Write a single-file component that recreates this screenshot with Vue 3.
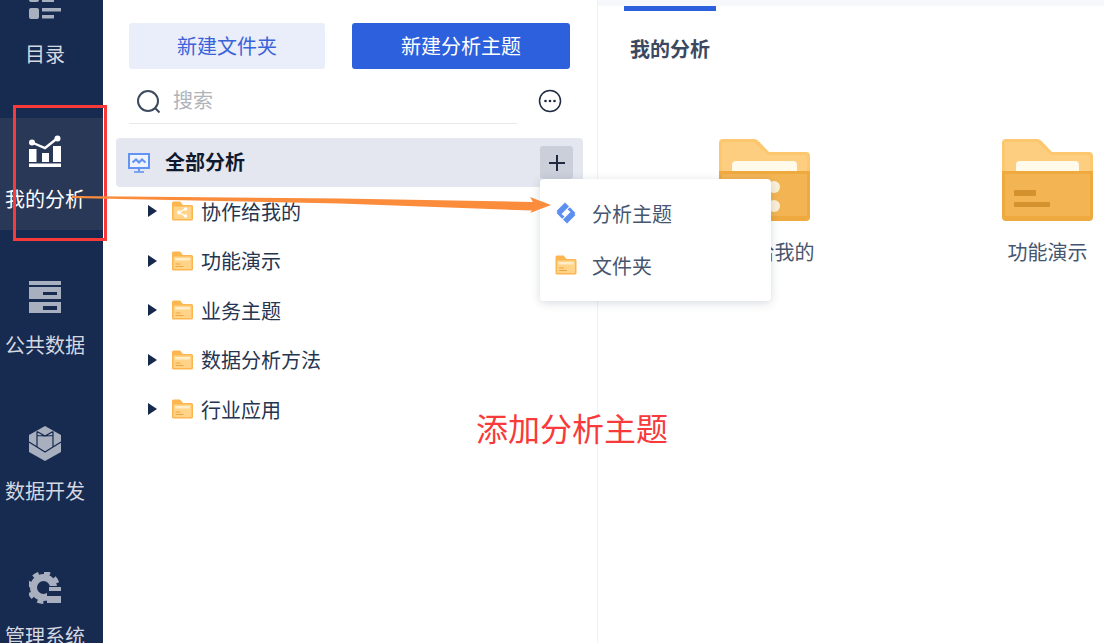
<script setup>
const treeRows = [
  { label: '协作给我的', share: true },
  { label: '功能演示' },
  { label: '业务主题' },
  { label: '数据分析方法' },
  { label: '行业应用' },
]
</script>

<template>
  <div class="app">
    <aside class="nav">
      <div class="nav-item">
        <svg class="nav-icon" viewBox="0 0 32 32" fill="#a8afbf">
          <rect x="0" y="0" width="10" height="12" rx="2" />
          <rect x="13" y="8" width="12" height="4" />
          <rect x="0" y="18" width="10" height="11" rx="2" />
          <rect x="13" y="18" width="19" height="3.500" />
          <rect x="13" y="25" width="12" height="3.500" />
        </svg>
        <span>目录</span>
      </div>
      <div class="nav-item active">
        <svg class="nav-icon" viewBox="0 0 32 32">
          <path d="M3 7.500L16 13L28 3.500" fill="none" stroke="#fff" stroke-width="2.400" />
          <circle cx="3" cy="7.500" r="3" fill="#fff" />
          <circle cx="28.500" cy="3.500" r="3" fill="#fff" />
          <path d="M0 14h7.500v13H0zM13 18h7v9h-7zM24 11h8v16h-8zM0 28.500h32V32H0z" fill="#fff" />
        </svg>
        <span>我的分析</span>
      </div>
      <div class="nav-item">
        <svg class="nav-icon" viewBox="0 0 32 32" fill="#a8afbf">
          <rect x="0" y="0" width="32" height="4" />
          <path fill-rule="evenodd" d="M0 6h32v12H0zM14 11v3h14v-3z" />
          <path fill-rule="evenodd" d="M0 21h32v11H0zM14 25v4h14v-4z" />
        </svg>
        <span>公共数据</span>
      </div>
      <div class="nav-item">
        <svg class="nav-icon cube" viewBox="0 0 32 35">
          <path d="M16 0L32 9V26L16 35L0 26V9z" fill="#a8afbf" />
          <path d="M8 5.500L16 10L24 5.500M8 5.500V9.500M24 5.500V9.500M16 10L8 9.500M16 10L24 9.500M8 9.500V21M24 9.500V21M0 16L8 21L16 26L24 21L32 16" fill="none" stroke="#172a4f" stroke-width="1.200" />
        </svg>
        <span>数据开发</span>
      </div>
      <div class="nav-item">
        <svg class="nav-icon" viewBox="0 0 32 32">
          <circle cx="14.500" cy="15.500" r="10" fill="none" stroke="#a8afbf" stroke-width="7" />
          <circle cx="14.500" cy="15.500" r="14.500" fill="none" stroke="#a8afbf" stroke-width="4" stroke-dasharray="6 5.400" />
          <rect x="18" y="14" width="14" height="18" fill="#172a4f" />
          <rect x="20" y="15" width="12" height="4" fill="#a8afbf" />
          <rect x="18" y="24" width="14" height="7" fill="#a8afbf" />
        </svg>
        <span>管理系统</span>
      </div>
    </aside>

    <section class="tree-panel">
      <div class="actions">
        <button class="btn btn-light">新建文件夹</button>
        <button class="btn btn-primary">新建分析主题</button>
      </div>
      <div class="search-row">
        <div class="search">
          <svg class="search-icon" width="26" height="26" viewBox="0 0 26 26" fill="none" stroke="#3d4a60" stroke-width="2">
            <circle cx="12" cy="12" r="10" />
            <path d="M19 19l4.500 4.500" />
          </svg>
          <span>搜索</span>
        </div>
        <svg class="more" width="24" height="24" viewBox="0 0 24 24">
          <circle cx="12" cy="12" r="10.500" fill="none" stroke="#1f2a40" stroke-width="1.500" />
          <circle cx="7.500" cy="12" r="1.300" fill="#1f2a40" />
          <circle cx="12" cy="12" r="1.300" fill="#1f2a40" />
          <circle cx="16.500" cy="12" r="1.300" fill="#1f2a40" />
        </svg>
      </div>
      <div class="tree-head">
        <svg class="monitor" width="22" height="20" viewBox="0 0 22 20" fill="none" stroke="#6394f3" stroke-width="2">
          <rect x="1" y="1" width="20" height="14" fill="#eef3fe" />
          <path d="M4.500 9.500L8 6.500L11 9.500L14 6.500L17.500 9.500" stroke-width="2.200" />
          <path d="M11 15v3" />
          <path d="M6 19h10" stroke-width="1.600" />
        </svg>
        <strong>全部分析</strong>
        <span class="plus">
          <svg width="18" height="18" viewBox="0 0 18 18" stroke="#1f2a40" stroke-width="2"><path d="M9 1v16M1 9h16" /></svg>
        </span>
      </div>
      <ul class="tree">
        <li v-for="row in treeRows" :key="row.label" class="tree-row">
          <i class="caret"></i>
          <svg class="small-folder" width="21" height="20" viewBox="0 0 21 20">
            <path d="M0 2a1.500 1.500 0 0 1 1.500-1.500H8L11 4h8.500A1.500 1.500 0 0 1 21 5.500V18a1.500 1.500 0 0 1-1.500 1.500h-18A1.500 1.500 0 0 1 0 18z" fill="#fbb64f" />
            <path d="M1.500 5.500h18V18h-18z" fill="#ffd488" />
            <template v-if="row.share">
              <path d="M7 11.500l6-3.500M7 11.500l6 3.500" stroke="#fff" stroke-width="1.200" />
              <circle cx="7" cy="11.500" r="2" fill="#fff" />
              <circle cx="13.500" cy="8" r="1.800" fill="#fff" />
              <circle cx="13.500" cy="15" r="1.800" fill="#fff" />
            </template>
            <template v-else>
              <path d="M3 7h15v2.500H3z" fill="#ffeec8" />
              <path d="M3.500 12.500h5v1h-5zM3.500 15h8v1h-8z" fill="#eda63d" />
            </template>
          </svg>
          <span>{{ row.label }}</span>
        </li>
      </ul>
    </section>

    <main class="main">
      <div class="strip"></div>
      <div class="tab"></div>
      <h2>我的分析</h2>
      <div class="folders">
        <div class="folder-card">
          <svg width="92" height="82" viewBox="1 0 92 82">
            <path d="M1 4a4 4 0 0 1 4-4h31a6 6 0 0 1 4 1.500L51 13h37a4 4 0 0 1 4 4v25H1z" fill="#fdc76f" />
            <path d="M4 3h32l14 13h39v25H4z" fill="#fdce80" />
            <path d="M14 26a4 4 0 0 1 4-4h57a4 4 0 0 1 4 4v10H14z" fill="#fffae9" />
            <path d="M1 32h91v46a4 4 0 0 1-4 4H5a4 4 0 0 1-4-4z" fill="#efaa3f" />
            <path d="M4 35h85v42H4z" fill="#f3b554" />
            <circle cx="56" cy="48" r="6" fill="#fbf0d8" />
            <circle cx="56" cy="67" r="6" fill="#fbf0d8" />
          </svg>
          <span>协作给我的</span>
        </div>
        <div class="folder-card">
          <svg width="92" height="82" viewBox="1 0 92 82">
            <path d="M1 4a4 4 0 0 1 4-4h31a6 6 0 0 1 4 1.500L51 13h37a4 4 0 0 1 4 4v25H1z" fill="#fdc76f" />
            <path d="M4 3h32l14 13h39v25H4z" fill="#fdce80" />
            <path d="M15 26a4 4 0 0 1 4-4h55a4 4 0 0 1 4 4v10H15z" fill="#fffae9" />
            <path d="M1 32h91v46a4 4 0 0 1-4 4H5a4 4 0 0 1-4-4z" fill="#efaa3f" />
            <path d="M4 35h85v42H4z" fill="#f3b554" />
            <rect x="13" y="51" width="22" height="6" rx="1" fill="#d4922f" />
            <rect x="13" y="63" width="36" height="5" rx="1" fill="#d4922f" />
          </svg>
          <span>功能演示</span>
        </div>
      </div>
    </main>

    <div class="popup">
      <div class="popup-item">
        <svg width="22" height="22" viewBox="0 0 22 22" fill="#5c8ff0">
          <path d="M10 0.500L1.500 9L5.500 13L14 4.500z" />
          <path d="M12 21.500L20.500 13L16.500 9L8 17.500z" />
          <path d="M14.800 5.200L20.500 11L18.500 12.500L12.500 7.500z" />
          <path d="M7.200 16.800L1.500 11L3.500 9.500L9.500 14.500z" />
        </svg>
        <span>分析主题</span>
      </div>
      <div class="popup-item">
        <svg width="22" height="20" viewBox="0 0 21 20">
          <path d="M0 2a1.500 1.500 0 0 1 1.500-1.500H8L11 4h8.500A1.500 1.500 0 0 1 21 5.500V18a1.500 1.500 0 0 1-1.500 1.500h-18A1.500 1.500 0 0 1 0 18z" fill="#fbb64f" />
          <path d="M1.500 5.500h18V18h-18z" fill="#ffd488" />
          <path d="M3 7h15v2.500H3z" fill="#ffeec8" />
          <path d="M3.500 12.500h5v1h-5zM3.500 15h8v1h-8z" fill="#eda63d" />
        </svg>
        <span>文件夹</span>
      </div>
    </div>

    <div class="red-box"></div>
    <svg class="arrow" width="1104" height="643" viewBox="0 0 1104 643">
      <path d="M72 196L340 198.500L533 202L530 197L551 205L530 213L532 210.500L340 203.500L72 198z" fill="#fb8c3c" />
    </svg>
    <div class="note">添加分析主题</div>
  </div>
</template>

<style>
html, body { margin: 0; overflow: hidden; }
</style>

<style scoped>
.app {
  position: relative;
  display: flex;
  width: 1104px;
  height: 643px;
  overflow: hidden;
  background: #fff;
  font-family: "Noto Sans CJK SC", "Liberation Sans", sans-serif;
  font-size: 20px;
  color: #2f3d55;
}
.nav {
  flex: 0 0 103px;
  background: #172a4f;
  height: 643px;
  overflow: hidden;
}
.nav-item {
  display: flex;
  flex-direction: column;
  align-items: center;
  height: 112px;
  margin-bottom: 33.500px;
  padding: 17px 13px 0 0;
  box-sizing: border-box;
  color: #d4d8e0;
  line-height: 28px;
  white-space: nowrap;
}
.nav-item:first-child { margin-top: -27.500px; }
.nav-item.active { background: #2a3857; color: #fff; }
.nav-icon { width: 32px; height: 32px; margin-bottom: 18px; flex: none; }
.nav-icon.cube { height: 35px; margin-bottom: 16px; }
.tree-panel {
  flex: 0 0 494px;
  border-right: 1px solid #f0f1f4;
  padding-top: 23px;
}
.actions { display: flex; gap: 27px; padding-left: 26px; }
.btn {
  height: 46px;
  border: 0;
  border-radius: 3px;
  font: inherit;
  padding: 0 0 2px;
}
.btn-light { width: 196px; background: #e9eefa; color: #3b62d8; }
.btn-primary { width: 218px; background: #2d60dc; color: #fff; }
.search-row {
  display: flex;
  align-items: center;
  margin: 9px 0 0 26px;
}
.search {
  display: flex;
  align-items: center;
  width: 388px;
  height: 46px;
  border-bottom: 1px solid #e7e8ec;
  box-sizing: border-box;
  padding: 0 0 2px 7px;
  color: #b0b3ba;
}
.search-icon { margin-right: 11px; margin-top: 4px; }
.more { margin-left: 21px; margin-top: -1px; }
.tree-head {
  display: flex;
  align-items: center;
  width: 467px;
  height: 49px;
  box-sizing: border-box;
  margin: 14px 0 0 13px;
  padding: 0 10px 0 12px;
  background: #e4e7ef;
  border-radius: 4px;
  color: #101a2e;
}
.tree-head strong { margin-left: 15px; font-weight: 700; line-height: 28px; margin-top: -2px; }
.plus {
  display: flex;
  align-items: center;
  justify-content: center;
  width: 33px;
  height: 33px;
  margin-left: auto;
  background: #cbcfda;
  border-radius: 3px;
}
.tree { list-style: none; margin: -0.300px 0 0; padding: 0; }
.tree-row {
  display: flex;
  align-items: center;
  height: 49.500px;
  padding-left: 45px;
  color: #26354f;
}
.caret {
  width: 0;
  height: 0;
  border-style: solid;
  border-width: 6px 0 6px 9px;
  border-color: transparent transparent transparent #16294d;
}
.small-folder { margin: 0 8px 0 15px; }
.main { flex: 1; min-width: 0; overflow: hidden; }
.strip { height: 6px; background: #f7f8fc; }
.tab { width: 92px; height: 5px; margin-left: 26px; background: #2d60dc; }
.main h2 {
  margin: 21px 0 0 32px;
  font-size: 20px;
  line-height: 34px;
  font-weight: 700;
  color: #3b4860;
}
.folders {
  display: grid;
  grid-template-columns: 283px 283px;
  margin: 73px 0 0 25px;
  width: 566px;
}
.folder-card {
  display: flex;
  flex-direction: column;
  align-items: center;
  color: #47566f;
  line-height: 28px;
}
.folder-card svg { margin-bottom: 17px; }
.popup {
  position: absolute;
  left: 540px;
  top: 179px;
  width: 231px;
  height: 122px;
  padding: 8px 0;
  box-sizing: border-box;
  background: #fff;
  border-radius: 4px;
  box-shadow: 0 2px 10px rgba(40, 50, 80, 0.18);
  color: #47566f;
}
.popup-item {
  display: flex;
  align-items: center;
  gap: 15px;
  height: 52px;
  padding-left: 15px;
}
.red-box {
  position: absolute;
  left: 13px;
  top: 105px;
  width: 94px;
  height: 136px;
  box-sizing: border-box;
  border: 3px solid #f83a3a;
}
.arrow { position: absolute; left: 0; top: 0; pointer-events: none; }
.note {
  position: absolute;
  left: 476px;
  top: 403px;
  font-size: 32px;
  line-height: 48px;
  color: #f83a3a;
}
</style>
